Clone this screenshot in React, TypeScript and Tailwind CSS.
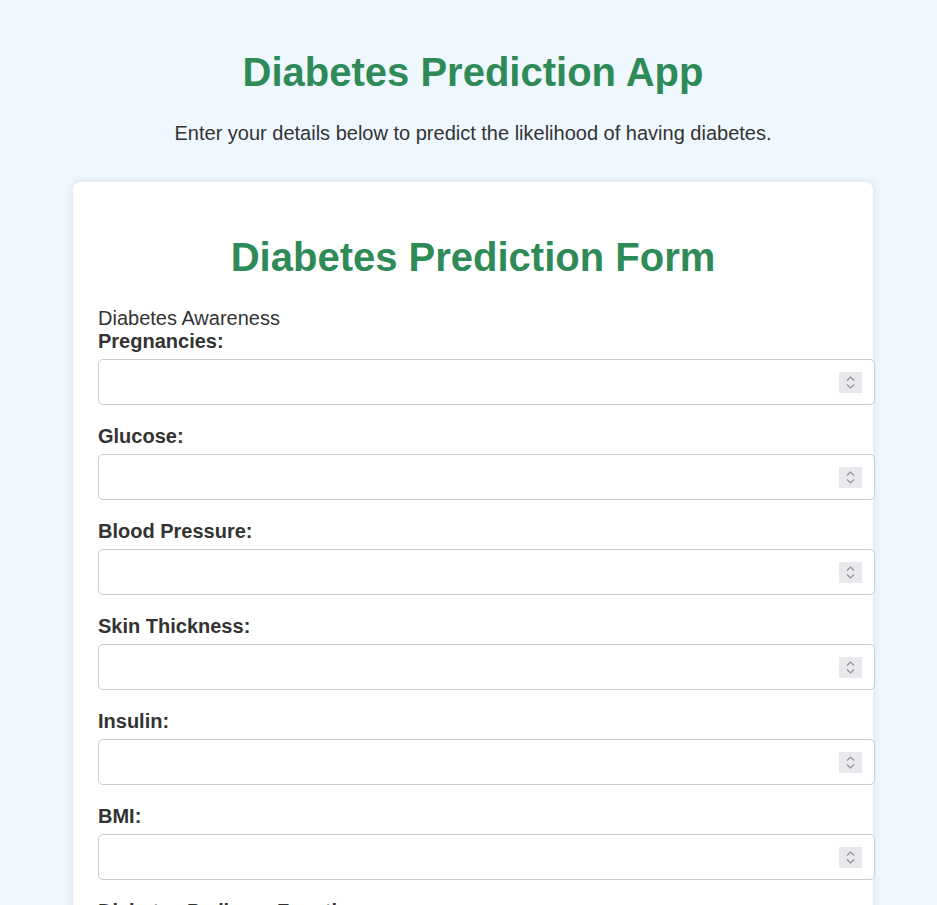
import React from "react";

const fields = [
  "Pregnancies",
  "Glucose",
  "Blood Pressure",
  "Skin Thickness",
  "Insulin",
  "BMI",
  "Diabetes Pedigree Function",
  "Age",
];

function Spinner() {
  return (
    <div className="pointer-events-none absolute top-[13px] right-[13px] flex h-[21px] w-[23px] flex-col items-center justify-center gap-[3px] bg-[#e9e9ed]">
      <svg width="9" height="5" viewBox="0 0 9 5" fill="none">
        <path d="M1 4.5L4.5 1L8 4.5" stroke="#8f8f96" strokeWidth="1.2" />
      </svg>
      <svg width="9" height="5" viewBox="0 0 9 5" fill="none">
        <path d="M1 0.5L4.5 4L8 0.5" stroke="#8f8f96" strokeWidth="1.2" />
      </svg>
    </div>
  );
}

export default function App() {
  return (
    <div className="min-h-screen bg-[#eff7ff] pl-[9px] pt-[49px] pb-10 font-['Liberation_Sans',Arial,sans-serif] text-[#333]">
      <h1 className="text-center text-[40px] leading-[46px] font-bold text-[#2e8b57]">
        Diabetes Prediction App
      </h1>
      <p className="mt-[27px] text-center text-[20px] leading-[23px]">
        Enter your details below to predict the likelihood of having diabetes.
      </p>

      <div className="mx-auto mt-[37px] w-[800px] rounded-lg bg-white px-[25px] pt-[52px] pb-8 shadow-[0_0_10px_rgba(0,0,0,0.1)]">
        <h2 className="text-center text-[40px] leading-[46px] font-bold text-[#2e8b57]">
          Diabetes Prediction Form
        </h2>

        <form className="mt-[27px] flex flex-col">
          <div className="text-[20px] leading-[23px]">Diabetes Awareness</div>
          {fields.map((f) => (
            <div key={f} className="mb-[20px] flex flex-col">
              <label className="text-[20px] leading-[23px] font-bold">{f}:</label>
              <div className="relative mt-[6px] w-[calc(100%+27px)]">
                <input
                  type="number"
                  className="h-[46px] w-full rounded-[5px] border border-[#ccc] bg-white px-3 text-[16px] outline-none [appearance:textfield] [&::-webkit-inner-spin-button]:appearance-none [&::-webkit-outer-spin-button]:appearance-none"
                />
                <Spinner />
              </div>
            </div>
          ))}
          <button
            type="button"
            className="mt-2 w-[777px] rounded-[5px] bg-[#2e8b57] py-3 text-[20px] font-bold text-white"
          >
            Predict
          </button>
        </form>
      </div>
    </div>
  );
}
